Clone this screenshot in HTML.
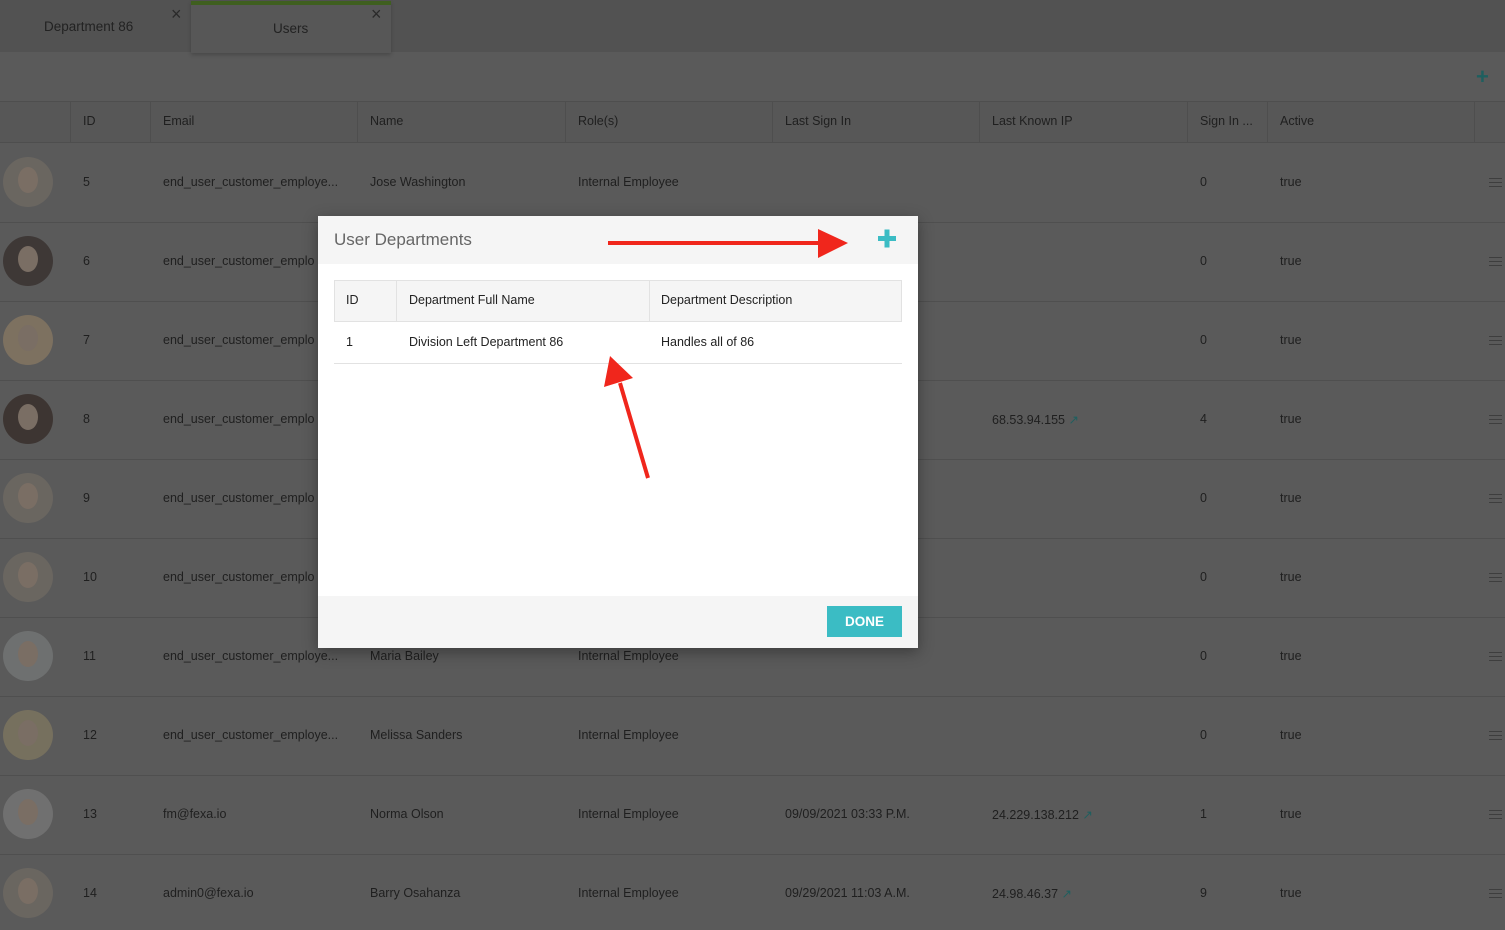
<!DOCTYPE html>
<html><head><meta charset="utf-8"><style>
*{margin:0;padding:0;box-sizing:border-box}
body{width:1505px;height:930px;overflow:hidden;background:#5a5a5a;font-family:"Liberation Sans",sans-serif;color:#1f1f1f;position:relative;font-size:12.5px}
.a{position:absolute;white-space:nowrap}
.tabbar{position:absolute;left:0;top:0;width:1505px;height:52px;background:#525252}
.tab2{position:absolute;left:191px;top:1px;width:200px;height:52px;background:#575757;border-top:4px solid #3f5f1f;box-shadow:0 2px 4px rgba(0,0,0,.2)}
.hdr{position:absolute;left:0;top:101px;width:1505px;height:42px;background:#575757;border-top:1px solid #4e4e4e;border-bottom:1px solid #4e4e4e}
.vl{position:absolute;top:101px;height:42px;width:1px;background:#4e4e4e}
.hl{position:absolute;left:0;width:1505px;height:1px;background:#4f4f4f}
.av{position:absolute;left:3px;width:50px;height:50px;border-radius:50%;background:#6a6660}
.av::after{content:"";position:absolute;left:15px;top:10px;width:20px;height:26px;border-radius:50%;background:#7a6e64}
.mn{position:absolute;left:1489px;width:13px;height:9px;border-top:1px solid #3e3e3e;border-bottom:1px solid #3e3e3e}
.mn::after{content:"";position:absolute;left:0;top:3px;width:13px;height:1px;background:#3e3e3e}
.modal{position:absolute;left:318px;top:216px;width:600px;height:432px;background:#fff;box-shadow:0 4px 14px rgba(0,0,0,.35)}
.mh{position:absolute;left:0;top:0;width:600px;height:48px;background:#f5f5f5}
.mf{position:absolute;left:0;top:380px;width:600px;height:52px;background:#f5f5f5}
</style></head><body>
<div class="tabbar"></div>
<div class="tab2"></div>
<div class="a" style="left:44px;top:19px;font-size:13.5px;color:#222">Department 86</div>
<div class="a" style="left:171px;top:4px;font-size:18px;color:#2a2a2a">×</div>
<div class="a" style="left:273px;top:21px;font-size:13.5px;color:#222">Users</div>
<div class="a" style="left:371px;top:4px;font-size:18px;color:#2a2a2a">×</div>
<div class="a" style="left:1476px;top:64px;font-size:22px;font-weight:bold;color:#1e5f5f">+</div>
<div class="hdr"></div>
<div class="vl" style="left:70px"></div><div class="vl" style="left:150px"></div><div class="vl" style="left:357px"></div><div class="vl" style="left:565px"></div><div class="vl" style="left:772px"></div><div class="vl" style="left:979px"></div><div class="vl" style="left:1187px"></div><div class="vl" style="left:1267px"></div><div class="vl" style="left:1474px"></div>
<div class="a" style="left:83px;top:114px">ID</div>
<div class="a" style="left:163px;top:114px">Email</div>
<div class="a" style="left:370px;top:114px">Name</div>
<div class="a" style="left:578px;top:114px">Role(s)</div>
<div class="a" style="left:785px;top:114px">Last Sign In</div>
<div class="a" style="left:992px;top:114px">Last Known IP</div>
<div class="a" style="left:1200px;top:114px">Sign In ...</div>
<div class="a" style="left:1280px;top:114px">Active</div>

<!-- rows -->
<div class="hl" style="top:222px"></div><div class="hl" style="top:301px"></div><div class="hl" style="top:380px"></div><div class="hl" style="top:459px"></div><div class="hl" style="top:538px"></div><div class="hl" style="top:617px"></div><div class="hl" style="top:696px"></div><div class="hl" style="top:775px"></div><div class="hl" style="top:854px"></div>
<div class="av" style="top:157px"></div><div class="av" style="top:236px;background:#3e3836"></div><div class="av" style="top:315px;background:#7d7160"></div><div class="av" style="top:394px;background:#3d3532"></div><div class="av" style="top:473px"></div><div class="av" style="top:552px"></div><div class="av" style="top:631px;background:#6e7070"></div><div class="av" style="top:710px;background:#76705e"></div><div class="av" style="top:789px;background:#707070"></div><div class="av" style="top:868px"></div>
<div class="mn" style="top:178px"></div><div class="mn" style="top:257px"></div><div class="mn" style="top:336px"></div><div class="mn" style="top:415px"></div><div class="mn" style="top:494px"></div><div class="mn" style="top:573px"></div><div class="mn" style="top:652px"></div><div class="mn" style="top:731px"></div><div class="mn" style="top:810px"></div><div class="mn" style="top:889px"></div>

<div class="a" style="left:83px;top:175px">5</div><div class="a" style="left:163px;top:175px">end_user_customer_employe...</div><div class="a" style="left:370px;top:175px">Jose Washington</div><div class="a" style="left:578px;top:175px">Internal Employee</div><div class="a" style="left:1200px;top:175px">0</div><div class="a" style="left:1280px;top:175px">true</div>
<div class="a" style="left:83px;top:254px">6</div><div class="a" style="left:163px;top:254px">end_user_customer_emplo</div><div class="a" style="left:1200px;top:254px">0</div><div class="a" style="left:1280px;top:254px">true</div>
<div class="a" style="left:83px;top:333px">7</div><div class="a" style="left:163px;top:333px">end_user_customer_emplo</div><div class="a" style="left:1200px;top:333px">0</div><div class="a" style="left:1280px;top:333px">true</div>
<div class="a" style="left:83px;top:412px">8</div><div class="a" style="left:163px;top:412px">end_user_customer_emplo</div><div class="a" style="left:992px;top:412px">68.53.94.155 <span style="color:#1e5f5f">↗</span></div><div class="a" style="left:1200px;top:412px">4</div><div class="a" style="left:1280px;top:412px">true</div>
<div class="a" style="left:83px;top:491px">9</div><div class="a" style="left:163px;top:491px">end_user_customer_emplo</div><div class="a" style="left:1200px;top:491px">0</div><div class="a" style="left:1280px;top:491px">true</div>
<div class="a" style="left:83px;top:570px">10</div><div class="a" style="left:163px;top:570px">end_user_customer_emplo</div><div class="a" style="left:1200px;top:570px">0</div><div class="a" style="left:1280px;top:570px">true</div>
<div class="a" style="left:83px;top:649px">11</div><div class="a" style="left:163px;top:649px">end_user_customer_employe...</div><div class="a" style="left:370px;top:649px">Maria Bailey</div><div class="a" style="left:578px;top:649px">Internal Employee</div><div class="a" style="left:1200px;top:649px">0</div><div class="a" style="left:1280px;top:649px">true</div>
<div class="a" style="left:83px;top:728px">12</div><div class="a" style="left:163px;top:728px">end_user_customer_employe...</div><div class="a" style="left:370px;top:728px">Melissa Sanders</div><div class="a" style="left:578px;top:728px">Internal Employee</div><div class="a" style="left:1200px;top:728px">0</div><div class="a" style="left:1280px;top:728px">true</div>
<div class="a" style="left:83px;top:807px">13</div><div class="a" style="left:163px;top:807px">fm@fexa.io</div><div class="a" style="left:370px;top:807px">Norma Olson</div><div class="a" style="left:578px;top:807px">Internal Employee</div><div class="a" style="left:785px;top:807px">09/09/2021 03:33 P.M.</div><div class="a" style="left:992px;top:807px">24.229.138.212 <span style="color:#1e5f5f">↗</span></div><div class="a" style="left:1200px;top:807px">1</div><div class="a" style="left:1280px;top:807px">true</div>
<div class="a" style="left:83px;top:886px">14</div><div class="a" style="left:163px;top:886px">admin0@fexa.io</div><div class="a" style="left:370px;top:886px">Barry Osahanza</div><div class="a" style="left:578px;top:886px">Internal Employee</div><div class="a" style="left:785px;top:886px">09/29/2021 11:03 A.M.</div><div class="a" style="left:992px;top:886px">24.98.46.37 <span style="color:#1e5f5f">↗</span></div><div class="a" style="left:1200px;top:886px">9</div><div class="a" style="left:1280px;top:886px">true</div>

<div class="modal">
  <div class="mh"></div>
  <div class="a" style="left:16px;top:14px;font-size:17px;color:#666">User Departments</div>
  <div style="position:absolute;left:16px;top:64px;width:568px;height:42px;background:#f5f5f5;border:1px solid #e2e2e2"></div>
  <div style="position:absolute;left:78px;top:64px;width:1px;height:42px;background:#e2e2e2"></div>
  <div style="position:absolute;left:331px;top:64px;width:1px;height:42px;background:#e2e2e2"></div>
  <div style="position:absolute;left:16px;top:147px;width:568px;height:1px;background:#e2e2e2"></div>
  <div class="a" style="left:28px;top:77px;color:#222">ID</div>
  <div class="a" style="left:91px;top:77px;color:#222">Department Full Name</div>
  <div class="a" style="left:343px;top:77px;color:#222">Department Description</div>
  <div class="a" style="left:28px;top:119px;color:#222">1</div>
  <div class="a" style="left:91px;top:119px;color:#222">Division Left Department 86</div>
  <div class="a" style="left:343px;top:119px;color:#222">Handles all of 86</div>
  <div class="mf"></div>
  <div style="position:absolute;left:509px;top:390px;width:75px;height:31px;background:#3bbcc4;color:#fff;font-size:13.5px;font-weight:bold;text-align:center;line-height:31px">DONE</div>
</div>
<svg style="position:absolute;left:0;top:0" width="1505" height="930">
  <rect x="878" y="236" width="18" height="5" fill="#3bbcc4"/><rect x="884.5" y="229.5" width="5" height="18" fill="#3bbcc4"/>
  <line x1="608" y1="243" x2="822" y2="243" stroke="#f0261c" stroke-width="4"/>
  <polygon points="848,243 818,229 818,258" fill="#f0261c"/>
  <line x1="648" y1="478" x2="620" y2="383" stroke="#f0261c" stroke-width="4"/>
  <polygon points="610,356 604,387 633,378" fill="#f0261c"/>
</svg>
</body></html>
